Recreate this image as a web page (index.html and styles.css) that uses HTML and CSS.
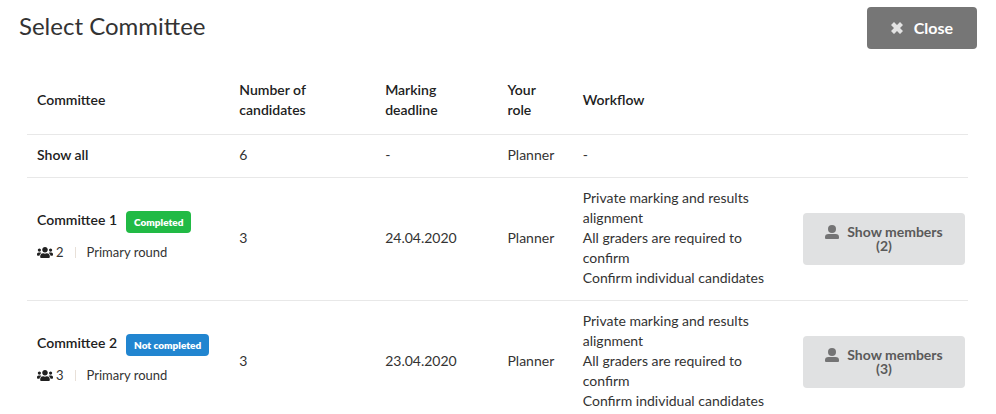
FILE: index.html
```html
<!DOCTYPE html>
<html lang="en">

<head>
    <meta charset="UTF-8">
    <meta name="viewport" content="width=device-width, initial-scale=1.0">
    <title>Select Committee</title>
    <link rel="stylesheet" href="styles.css">
</head>

<body>
    <svg class="sprite" aria-hidden="true">
        <symbol id="icon-users" viewBox="0 0 640 512">
            <path d="M96 224c35.300 0 64-28.700 64-64s-28.700-64-64-64-64 28.700-64 64 28.700 64 64 64zm448 0c35.300 0 64-28.700 64-64s-28.700-64-64-64-64 28.700-64 64 28.700 64 64 64zm32 32h-64c-17.600 0-33.500 7.100-45.100 18.600 40.300 22.100 68.900 62 75.100 109.400h66c17.700 0 32-14.300 32-32v-32c0-35.300-28.700-64-64-64zm-256 0c61.900 0 112-50.100 112-112S381.900 32 320 32 208 82.100 208 144s50.100 112 112 112zm76.800 32h-8.300c-20.800 10-43.900 16-68.500 16s-47.600-6-68.500-16h-8.300C179.600 288 128 339.600 128 403.200V432c0 26.500 21.500 48 48 48h288c26.500 0 48-21.500 48-48v-28.800c0-63.600-51.600-115.200-115.200-115.200zm-223.700-13.400C161.500 263.100 145.600 256 128 256H64c-35.300 0-64 28.700-64 64v32c0 17.700 14.300 32 32 32h65.900c6.300-47.400 34.900-87.300 75.200-109.400z"/>
        </symbol>
        <symbol id="icon-user" viewBox="0 0 14 14">
            <circle cx="7" cy="4" r="4"/>
            <path d="M3.500 9h7Q14 9 14 12v1q0 1-1 1H1q-1 0-1-1v-1q0-3 3.500-3z"/>
        </symbol>
        <symbol id="icon-close" viewBox="0 0 12 12">
            <path d="M3 0 6 3 9 0 12 3 9 6 12 9 9 12 6 9 3 12 0 9 3 6 0 3z"/>
        </symbol>
    </svg>

    <header class="page-header">
        <h1>Select Committee</h1>
        <button type="button" class="btn btn-close">
            <svg class="icon-close" aria-hidden="true"><use href="#icon-close"/></svg>Close
        </button>
    </header>

    <main>
        <table class="committees">
            <colgroup>
                <col class="col-name">
                <col class="col-candidates">
                <col class="col-deadline">
                <col class="col-role">
                <col class="col-workflow">
                <col class="col-action">
            </colgroup>
            <thead>
                <tr>
                    <th>Committee</th>
                    <th>Number of candidates</th>
                    <th>Marking deadline</th>
                    <th>Your role</th>
                    <th>Workflow</th>
                    <td></td>
                </tr>
            </thead>
            <tbody>
                <tr>
                    <td><strong>Show all</strong></td>
                    <td>6</td>
                    <td>-</td>
                    <td>Planner</td>
                    <td>-</td>
                    <td></td>
                </tr>
                <tr>
                    <td class="committee">
                        <div class="name">
                            <strong>Committee 1</strong>
                            <span class="label label-green">Completed</span>
                        </div>
                        <div class="meta">
                            <svg class="icon-users" aria-hidden="true"><use href="#icon-users"/></svg>
                            <span>2</span>
                            <span class="divider"></span>
                            <span>Primary round</span>
                        </div>
                    </td>
                    <td>3</td>
                    <td>24.04.2020</td>
                    <td>Planner</td>
                    <td>
                        Private marking and results alignment<br>
                        All graders are required to confirm<br>
                        Confirm individual candidates
                    </td>
                    <td class="action">
                        <button type="button" class="btn btn-members">
                            <svg class="icon-user" aria-hidden="true"><use href="#icon-user"/></svg>Show members (2)
                        </button>
                    </td>
                </tr>
                <tr>
                    <td class="committee">
                        <div class="name">
                            <strong>Committee 2</strong>
                            <span class="label label-blue">Not completed</span>
                        </div>
                        <div class="meta">
                            <svg class="icon-users" aria-hidden="true"><use href="#icon-users"/></svg>
                            <span>3</span>
                            <span class="divider"></span>
                            <span>Primary round</span>
                        </div>
                    </td>
                    <td>3</td>
                    <td>23.04.2020</td>
                    <td>Planner</td>
                    <td>
                        Private marking and results alignment<br>
                        All graders are required to confirm<br>
                        Confirm individual candidates
                    </td>
                    <td class="action">
                        <button type="button" class="btn btn-members">
                            <svg class="icon-user" aria-hidden="true"><use href="#icon-user"/></svg>Show members (3)
                        </button>
                    </td>
                </tr>
            </tbody>
        </table>
    </main>
</body>

</html>
```

FILE: styles.css
```css
* {
    margin: 0px;
    padding: 0px;
    box-sizing: border-box;
}

body {
    background-color: #ffffff;
    color: #212121;
    font-family: Lato, "Liberation Sans", sans-serif;
    font-size: 14px;
    line-height: 20px;
}

.sprite {
    display: none;
}

svg {
    fill: currentColor;
}

.page-header {
    display: flex;
    align-items: flex-start;
    justify-content: space-between;
    padding: 7px 19px 0px 19px;
}

h1 {
    font-size: 24px;
    font-weight: 400;
    line-height: 38px;
    color: #333333;
}

.btn {
    border: none;
    border-radius: 4px;
    font-family: inherit;
    font-weight: 700;
    cursor: pointer;
}

.btn-close {
    display: flex;
    align-items: center;
    column-gap: 11px;
    height: 42px;
    padding: 0px 24px 1px 24px;
    background-color: #767676;
    color: #ffffff;
    font-size: 16px;
}

.icon-close {
    width: 12px;
    height: 12px;
    opacity: 0.8;
}

main {
    padding: 20px 28px 0px 27px;
}

.committees {
    width: 100%;
    table-layout: fixed;
    border-collapse: separate;
    border-spacing: 0px;
}

.col-name {
    width: 21.5%;
}

.col-candidates {
    width: 15.5%;
}

.col-deadline {
    width: 13%;
}

.col-role {
    width: 8%;
}

.col-workflow {
    width: 23.4%;
}

.col-action {
    width: 18.6%;
}

th,
td {
    padding: 10px 10px 12px 10px;
    text-align: left;
    vertical-align: middle;
}

th {
    font-weight: 600;
}

thead th,
thead td {
    padding-top: 11px;
    padding-bottom: 14px;
}

tbody td {
    border-top: 1px solid #e8e8e8;
    color: #333333;
}

strong {
    color: #212121;
    font-weight: 600;
}

.committee {
    padding-bottom: 15px;
}

.name {
    display: flex;
    align-items: flex-start;
    column-gap: 9px;
    white-space: nowrap;
}

.name strong {
    line-height: 18px;
}

.label {
    padding: 0px 8px;
    border-radius: 4px;
    color: #ffffff;
    font-size: 10px;
    font-weight: 800;
    line-height: 22px;
}

.label-green {
    background-color: #21ba45;
}

.label-blue {
    background-color: #2185d0;
}

.meta {
    display: flex;
    align-items: center;
    margin-top: 9px;
    font-size: 13px;
}

.icon-users {
    width: 16px;
    height: 13px;
    margin-right: 3px;
    color: #212121;
}

.divider {
    width: 1px;
    height: 11px;
    margin: 0px 11px;
    background-color: #e8e0d8;
}

td.action {
    padding-top: 11px;
    padding-bottom: 11px;
    padding-right: 3px;
}

.btn-members {
    display: block;
    width: 100%;
    padding: 12px 20px;
    background-color: #e0e1e2;
    color: #5a5a5a;
    font-size: 14px;
    line-height: 14px;
}

.icon-user {
    width: 14px;
    height: 14px;
    margin-right: 8px;
    vertical-align: bottom;
    opacity: 0.8;
}
```
